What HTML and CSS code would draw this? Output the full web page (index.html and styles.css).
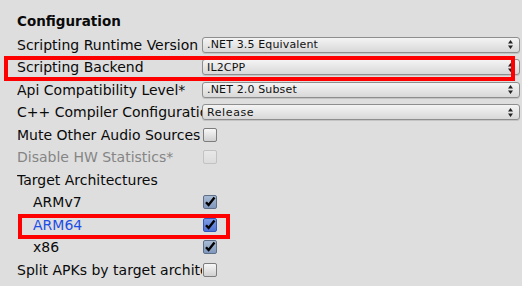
FILE: index.html
```html
<!DOCTYPE html>
<html>
<head>
<meta charset="utf-8">
<link rel="stylesheet" href="styles.css">
</head>
<body>
<div class="panel">
  <div class="header">Configuration</div>

  <div class="row">
    <div class="label">Scripting Runtime Version</div>
    <div class="dropdown"><span>.NET 3.5 Equivalent</span><svg class="arrows" width="5" height="9" viewBox="0 0 5 9"><path d="M2.5 0 L5 3.5 L0 3.5 Z M2.5 9 L5 5.5 L0 5.5 Z" fill="#222"/></svg></div>
  </div>

  <div class="row">
    <div class="label">Scripting Backend</div>
    <div class="dropdown"><span>IL2CPP</span><svg class="arrows" width="5" height="9" viewBox="0 0 5 9"><path d="M2.5 0 L5 3.5 L0 3.5 Z M2.5 9 L5 5.5 L0 5.5 Z" fill="#222"/></svg></div>
    <div class="mark mark-wide"></div>
  </div>

  <div class="row">
    <div class="label">Api Compatibility Level*</div>
    <div class="dropdown"><span>.NET 2.0 Subset</span><svg class="arrows" width="5" height="9" viewBox="0 0 5 9"><path d="M2.5 0 L5 3.5 L0 3.5 Z M2.5 9 L5 5.5 L0 5.5 Z" fill="#222"/></svg></div>
  </div>

  <div class="row">
    <div class="label">C++ Compiler Configuration</div>
    <div class="dropdown"><span class="wide">Release</span><svg class="arrows" width="5" height="9" viewBox="0 0 5 9"><path d="M2.5 0 L5 3.5 L0 3.5 Z M2.5 9 L5 5.5 L0 5.5 Z" fill="#222"/></svg></div>
  </div>

  <div class="row">
    <div class="label">Mute Other Audio Sources</div>
    <div class="check"></div>
  </div>

  <div class="row">
    <div class="label disabled">Disable HW Statistics*</div>
    <div class="check check-disabled"></div>
  </div>

  <div class="row">
    <div class="label">Target Architectures</div>
  </div>

  <div class="row">
    <div class="label sub">ARMv7</div>
    <div class="check checked"><svg width="12" height="12" viewBox="0 0 12 12"><path d="M2 6.2 L4.6 9 L10.5 1.5" fill="none" stroke="#000" stroke-width="2.4"/></svg></div>
  </div>

  <div class="row">
    <div class="label sub focus">ARM64</div>
    <div class="check checked focused"><svg width="12" height="12" viewBox="0 0 12 12"><path d="M2 6.2 L4.6 9 L10.5 1.5" fill="none" stroke="#000" stroke-width="2.4"/></svg></div>
    <div class="mark mark-small"></div>
  </div>

  <div class="row">
    <div class="label sub">x86</div>
    <div class="check checked"><svg width="12" height="12" viewBox="0 0 12 12"><path d="M2 6.2 L4.6 9 L10.5 1.5" fill="none" stroke="#000" stroke-width="2.4"/></svg></div>
  </div>

  <div class="row">
    <div class="label">Split APKs by target architecture</div>
    <div class="check"></div>
  </div>

  <div class="row last">
    <div class="label"></div>
    <div class="dropdown"></div>
  </div>
</div>
</body>
</html>
```

FILE: styles.css
```css
html, body {
  margin: 0;
  padding: 0;
}
body {
  background: #dedede;
  font-family: "DejaVu Sans", "Verdana", sans-serif;
  color: #0a0a0a;
  width: 522px;
  height: 286px;
  overflow: hidden;
}
.panel {
  padding: 13px 0 0 17px;
  height: 273px;
  overflow: hidden;
}
.header {
  font-weight: bold;
  font-size: 13.5px;
  height: 20.5px;
  line-height: 16px;
}
.row {
  position: relative;
  display: grid;
  grid-template-columns: 185px 318px;
  align-items: center;
  height: 22.5px;
}
.row.last {
  align-items: end;
}
.label {
  font-size: 14px;
  white-space: nowrap;
  overflow: hidden;
  line-height: 18px;
}
.label.sub {
  padding-left: 16px;
}
.label.disabled {
  color: #858585;
}
.label.focus {
  color: #1d4ee6;
}
.dropdown {
  height: 14px;
  border: 1px solid #8e8e8e;
  border-radius: 3px;
  background: linear-gradient(#f4f4f4, #d8d8d8);
  display: flex;
  align-items: center;
  justify-content: space-between;
  padding: 0 6px 0 4px;
  font-size: 11px;
  letter-spacing: 0.15px;
  color: #111;
  box-shadow: 0 1px 0 #c4c4c4;
}
.dropdown .wide {
  letter-spacing: 0.6px;
}
.arrows {
  flex: none;
}
.check {
  margin-left: 1px;
  width: 12px;
  height: 12px;
  border: 1px solid #7d7d7d;
  border-radius: 2px;
  background: linear-gradient(#f7f7f7, #d0d0d0);
  display: flex;
  align-items: center;
  justify-content: center;
}
.check-disabled {
  border-color: #c2c2c2;
  background: linear-gradient(#e8e8e8, #dcdcdc);
}
.checked {
  background: linear-gradient(#a9bad3, #7f98bd);
  border-color: #5f6f88;
}
.checked.focused {
  background: linear-gradient(#7d9be4, #4e72d4);
  border-color: #3458b8;
}
.mark {
  position: absolute;
  border: 4px solid #ff0000;
  pointer-events: none;
}
.mark-wide {
  left: -13px;
  top: 0;
  width: 503px;
  height: 17px;
}
.mark-small {
  left: 1px;
  top: 0;
  width: 204px;
  height: 17px;
}
```
